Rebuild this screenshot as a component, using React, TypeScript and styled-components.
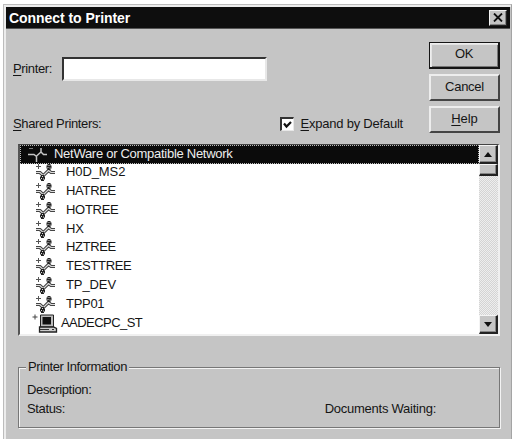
import React from "react";
import styled, { createGlobalStyle, css } from "styled-components";

const Global = createGlobalStyle`
  * { box-sizing: border-box; }
  body { margin: 0; background: #fff; overflow: hidden; }
`;

const Page = styled.div`
  width: 512px;
  height: 439px;
  padding: 4px 0 0 3px;
  font: 13px/16px "Liberation Sans", Arial, sans-serif;
  color: #151515;
`;

const Dialog = styled.main`
  display: flex;
  flex-direction: column;
  width: 509px;
  height: 435px;
  background: #c5c5c5;
  border: solid;
  border-width: 1px 1px 0;
  border-color: #bcbcbc #a4a4a4 #a4a4a4 #bcbcbc;
  box-shadow: inset 2px 2px 0 #ececec;
  padding: 2px 1px 0 2px;
`;

const TitleBar = styled.header`
  display: flex;
  align-items: center;
  justify-content: space-between;
  flex: none;
  height: 22px;
  padding: 0 3px 0 3px;
  background: #0e0e0e;
  border-bottom: 1px solid #555;
  color: #fff;
`;

const Title = styled.h1`
  margin: 0;
  font-size: 14px;
  line-height: 20px;
  font-weight: bold;
  letter-spacing: -0.05px;
`;

const raised = css`
  background: #c5c5c5;
  border: 1px solid;
  border-color: #f4f4f4 #222 #222 #f4f4f4;
  box-shadow: inset -1px -1px 0 #858585;
`;

const CloseButton = styled.button`
  ${raised}
  width: 18px;
  height: 16px;
  padding: 0;
  display: grid;
  place-items: center;
`;

const Top = styled.section`
  display: flex;
  justify-content: space-between;
  flex: none;
  height: 115px;
  padding: 13px 10px 0 7px;
`;

const Fields = styled.div`
  display: flex;
  flex-direction: column;
  width: 400px;
  padding-top: 15px;
`;

const Text = styled.span<{ $gap?: number }>`
  white-space: nowrap;
  letter-spacing: ${(p) => p.$gap ?? -0.35}px;
`;

const Key = styled.span`
  text-decoration: underline;
  text-decoration-thickness: 1px;
  text-underline-offset: 2px;
`;

const PrinterRow = styled.label`
  display: flex;
  align-items: center;
  height: 24px;
  gap: 10px;
`;

const Input = styled.input`
  width: 205px;
  height: 24px;
  border: 2px solid;
  border-color: #333 #e8e8e8 #e8e8e8 #333;
  background: #fff;
  outline: none;
  padding: 0 3px;
  font: inherit;
`;

const SharedRow = styled.div`
  display: flex;
  justify-content: space-between;
  align-items: center;
  height: 18px;
  margin-top: 34px;
  padding-right: 10px;
`;

const Check = styled.label`
  display: flex;
  align-items: center;
  gap: 7px;
`;

const Box = styled.span`
  display: grid;
  place-items: center;
  width: 14px;
  height: 14px;
  background: #fff;
  border: solid;
  border-width: 2px 1px 1px 2px;
  border-color: #333 #e8e8e8 #e8e8e8 #333;
`;

const Actions = styled.div`
  display: flex;
  flex-direction: column;
  gap: 5px;
  width: 71px;
`;

const Button = styled.button<{ $primary?: boolean }>`
  font: inherit;
  color: inherit;
  height: 27px;
  padding: 0 0 2px;
  background: #c5c5c5;
  border: solid;
  border-width: 2px;
  border-color: #ededed #444 #444 #ededed;
  ${(p) =>
    p.$primary &&
    css`
      border-width: 1px 2px 2px 1px;
      border-color: #151515;
      box-shadow: inset 1px 1px 0 #eee, inset 2px 2px 0 #e4e4e4, inset -1px -1px 0 #777;
    `}
`;

const List = styled.section`
  display: flex;
  flex: none;
  width: 482px;
  height: 192px;
  margin-left: 12px;
  border: solid;
  border-width: 1px 2px 2px 2px;
  border-color: #444 #f0f0f0 #f0f0f0 #555;
  background: #fff;
`;

const Rows = styled.ul`
  list-style: none;
  margin: 0;
  padding: 0;
  width: 459px;
`;

const Row = styled.li<{ $selected?: boolean; $computer?: boolean }>`
  display: flex;
  align-items: center;
  height: 18.8px;
  padding-left: ${(p) => (p.$selected ? 8 : p.$computer ? 12 : 15)}px;
  gap: ${(p) => (p.$selected ? 6 : p.$computer ? 3 : 9)}px;
  ${(p) =>
    p.$selected
      ? css`
          background: #0b0b0b;
          color: #eee;
          outline: 1px dotted #bbb;
          outline-offset: -1px;
        `
      : css`
          padding-bottom: 2px;
        `}
  svg { flex: none; }
`;

const ScrollBar = styled.div`
  display: flex;
  flex-direction: column;
  width: 19px;
  background: repeating-conic-gradient(#d4d4d4 0 25%, #eee 0 50%) 0 0 / 2px 2px;
`;

const ScrollButton = styled.button`
  ${raised}
  border-right-width: 2px;
  border-bottom-width: 2px;
  height: 19px;
  padding: 0;
  display: grid;
  place-items: center;
`;

const Thumb = styled.div`
  ${raised}
  border-right-width: 2px;
  border-bottom-width: 2px;
  height: 12px;
  margin-bottom: auto;
`;

const Group = styled.fieldset`
  display: flex;
  flex-direction: column;
  flex: none;
  width: 482px;
  height: 69px;
  margin: 23px 0 0 12px;
  padding: 5px 63px 0 8px;
  border: 1px solid #777;
  box-shadow: 1px 1px 0 #f3f3f3, inset 1px 1px 0 #f3f3f3;
  min-width: 0;
`;

const Legend = styled.legend`
  padding: 0 2px;
  margin-left: -1px;
  height: 16px;
  background: #c5c5c5;
`;

const InfoLine = styled.div`
  display: flex;
  justify-content: space-between;
  height: 19px;
  line-height: 19px;
`;

const TreeIcon = () => (
  <svg width="22" height="18" viewBox="0 0 22 18" fill="none">
    <path d="M3.500 1v5M1 3.500h5" stroke="#555" />
    <path d="M1 9.500h4l2.500 2.500h1.500l4.500-4.500 2.500 2H20" stroke="#444" strokeWidth="3.200" />
    <path d="M1 9.500h4l2.500 2.500h1.500l4.500-4.500 2.500 2H20" stroke="#ddd" strokeWidth="1.100" />
    <path d="M12.500 1h3v1.500h1v3h-1V7h-3V5.500h-1v-3h1zM6 12h3v1.500h1v3H9V18H6v-1.500H5v-3h1z" fill="#222" />
    <path d="M13.500 2h1v1h-1zM12.500 4h1v1h-1zM14.500 4.500h1v1h-1zM7 13h1v1H7zM6 15h1v1H6zM8 15.500h1v1H8z" fill="#ddd" />
  </svg>
);

const NetworkIcon = () => (
  <svg width="20" height="18" viewBox="0 0 20 18" fill="none">
    <path d="M1 3.500h4" stroke="#777" />
    <path d="M0 9.500h6l2.500 2M8 11.500l5-4.500M13 3v4l2.500 2.500H19M8.500 11v6" stroke="#c4c4c4" strokeWidth="1.500" />
  </svg>
);

const ComputerIcon = () => (
  <svg width="26" height="20" viewBox="0 0 26 20">
    <path d="M3 1.500v5M.5 4h5" stroke="#444" />
    <path d="M8.500 2h13v12h-13z" fill="#bbb" stroke="#222" />
    <path d="M10.500 4h8.500v7.500h-8.500z" fill="#111" />
    <path d="M7.500 14h14l3 1.500v3.500h-17z" fill="#ccc" stroke="#222" strokeWidth="1.300" />
    <path d="M8 16.500h9M20 16.500h2" stroke="#333" />
  </svg>
);

const trees: [string, number][] = [
  ["H0D_MS2", -0.1],
  ["HATREE", -0.3],
  ["HOTREE", -0.3],
  ["HX", -0.2],
  ["HZTREE", -0.35],
  ["TESTTREE", -0.3],
  ["TP_DEV", -0.1],
  ["TPP01", -0.3],
];

export default function App() {
  return (
    <Page>
      <Global />
      <Dialog>
        <TitleBar>
          <Title>Connect to Printer</Title>
          <CloseButton aria-label="Close">
            <svg width="10" height="9" viewBox="0 0 10 9">
              <path d="M1 .5l8 8M9 .5l-8 8" stroke="#111" strokeWidth="1.800" />
            </svg>
          </CloseButton>
        </TitleBar>
        <Top>
          <Fields>
            <PrinterRow>
              <Text><Key>P</Key>rinter:</Text>
              <Input />
            </PrinterRow>
            <SharedRow>
              <Text><Key>S</Key>hared Printers:</Text>
              <Check>
                <Box>
                  <svg width="9" height="9" viewBox="0 0 9 9">
                    <path d="M1 3.500l2.500 3L8 2" fill="none" stroke="#111" strokeWidth="2.200" />
                  </svg>
                </Box>
                <Text $gap={-0.22}><Key>E</Key>xpand by Default</Text>
              </Check>
            </SharedRow>
          </Fields>
          <Actions>
            <Button $primary><Text>OK</Text></Button>
            <Button><Text $gap={-0.25}>Cancel</Text></Button>
            <Button><Text $gap={-0.1}><Key>H</Key>elp</Text></Button>
          </Actions>
        </Top>
        <List>
          <Rows>
            <Row $selected>
              <NetworkIcon />
              <Text $gap={-0.28}>NetWare or Compatible Network</Text>
            </Row>
            {trees.map(([name, gap]) => (
              <Row key={name}>
                <TreeIcon />
                <Text $gap={gap}>{name}</Text>
              </Row>
            ))}
            <Row $computer>
              <ComputerIcon />
              <Text $gap={-0.55}>AADECPC_ST</Text>
            </Row>
          </Rows>
          <ScrollBar>
            <ScrollButton aria-label="Scroll up">
              <svg width="8" height="5" viewBox="0 0 8 5"><path d="M0 5l4-5 4 5z" fill="#111" /></svg>
            </ScrollButton>
            <Thumb />
            <ScrollButton aria-label="Scroll down">
              <svg width="8" height="5" viewBox="0 0 8 5"><path d="M0 0h8L4 5z" fill="#111" /></svg>
            </ScrollButton>
          </ScrollBar>
        </List>
        <Group>
          <Legend><Text $gap={-0.42}>Printer Information</Text></Legend>
          <InfoLine><Text>Description:</Text></InfoLine>
          <InfoLine>
            <Text>Status:</Text>
            <Text $gap={-0.25}>Documents Waiting:</Text>
          </InfoLine>
        </Group>
      </Dialog>
    </Page>
  );
}
